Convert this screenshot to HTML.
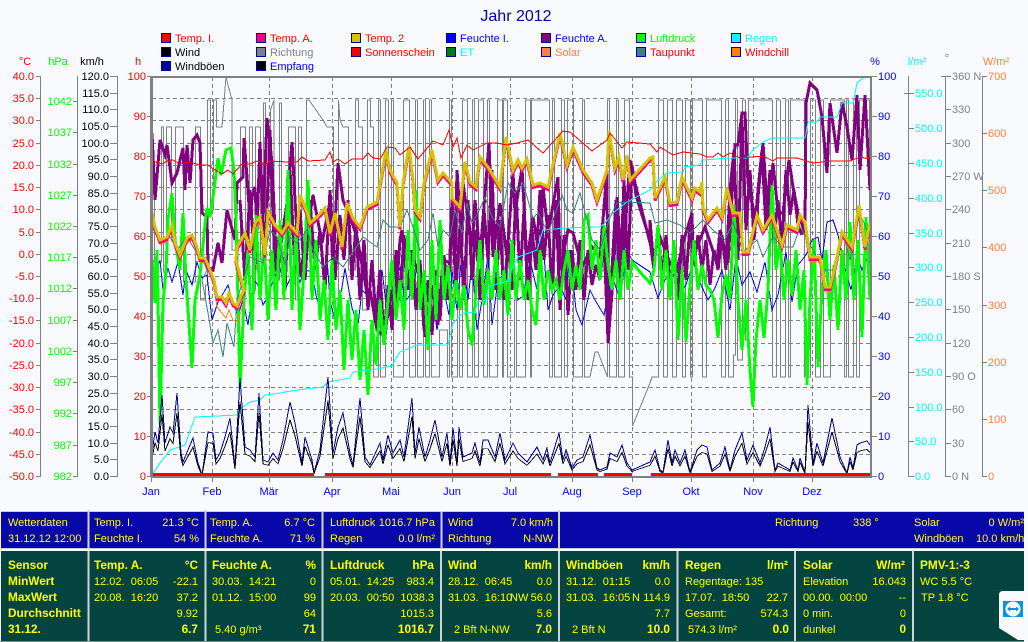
<!DOCTYPE html>
<html><head><meta charset="utf-8"><title>Jahr 2012</title>
<style>
html,body{margin:0;padding:0;width:1028px;height:642px;overflow:hidden;background:#F8FAFD}
svg{display:block;position:absolute;left:0;top:0}
text{font-family:"Liberation Sans",sans-serif;font-size:11px}
.e{text-anchor:end}.c{text-anchor:middle}
.y text{fill:#FF0}.y .b{font-weight:bold;font-size:11.8px}
polyline,path.l{fill:none;stroke-linejoin:miter;shape-rendering:crispEdges}
</style></head><body>
<svg width="1028" height="642" viewBox="0 0 1028 642" xmlns="http://www.w3.org/2000/svg">
<text x="516" y="21" class="c" style="font-size:16px" fill="#0000AA">Jahr 2012</text>

<!-- legend -->
<g stroke="#0000A0" stroke-width="1">
<rect x="161.500" y="33.500" width="9" height="9" fill="#F00"/><rect x="256.500" y="33.500" width="9" height="9" fill="#FF0080"/><rect x="351.500" y="33.500" width="9" height="9" fill="#D4C400"/><rect x="446.500" y="33.500" width="9" height="9" fill="#00F"/><rect x="541.500" y="33.500" width="9" height="9" fill="#800080"/><rect x="636.500" y="33.500" width="9" height="9" fill="#0F0"/><rect x="731.500" y="33.500" width="9" height="9" fill="#0FF"/>
<rect x="161.500" y="47.500" width="9" height="9" fill="#000"/><rect x="256.500" y="47.500" width="9" height="9" fill="#808080"/><rect x="351.500" y="47.500" width="9" height="9" fill="#F00"/><rect x="446.500" y="47.500" width="9" height="9" fill="#008000"/><rect x="541.500" y="47.500" width="9" height="9" fill="#FF8040"/><rect x="636.500" y="47.500" width="9" height="9" fill="#408080"/><rect x="731.500" y="47.500" width="9" height="9" fill="#FF8000"/>
<rect x="161.500" y="61.500" width="9" height="9" fill="#0000A0"/><rect x="256.500" y="61.500" width="9" height="9" fill="#000"/>
</g>
<g>
<text x="175" y="42" fill="#F00">Temp. I.</text><text x="270" y="42" fill="#F00">Temp. A.</text><text x="365" y="42" fill="#F00">Temp. 2</text><text x="460" y="42" fill="#00F">Feuchte I.</text><text x="555" y="42" fill="#00F">Feuchte A.</text><text x="650" y="42" fill="#0F0">Luftdruck</text><text x="745" y="42" fill="#0FF">Regen</text>
<text x="175" y="56" fill="#000">Wind</text><text x="270" y="56" fill="#808080">Richtung</text><text x="365" y="56" fill="#F00">Sonnenschein</text><text x="460" y="56" fill="#0FF">ET</text><text x="555" y="56" fill="#FF8040">Solar</text><text x="650" y="56" fill="#F00">Taupunkt</text><text x="745" y="56" fill="#F00">Windchill</text>
<text x="175" y="70" fill="#000">Windböen</text><text x="270" y="70" fill="#00F">Empfang</text>
</g>

<!-- axis titles -->
<text x="25" y="65" class="c" fill="#F00">°C</text><text x="58" y="65" class="c" fill="#0F0">hPa</text><text x="92" y="65" class="c" fill="#000">km/h</text><text x="138" y="65" class="c" fill="#F00">h</text>
<text x="875" y="65" class="c" fill="#00F">%</text><text x="917" y="65" class="c" fill="#0FF">l/m²</text><text x="947" y="62" class="c" fill="#808080">°</text><text x="996" y="65" class="c" fill="#FF8040">W/m²</text>

<!-- left axes -->
<path class="l" stroke="#808080" d="M40.500 76V476M36 76.500H41M36 98.500H41M36 120.500H41M36 143.500H41M36 165.500H41M36 187.500H41M36 209.500H41M36 232.500H41M36 254.500H41M36 276.500H41M36 298.500H41M36 320.500H41M36 343.500H41M36 365.500H41M36 387.500H41M36 409.500H41M36 432.500H41M36 454.500H41M36 476.500H41"/>
<path class="l" stroke="#808080" d="M77.500 76V476M73 101.500H78M73 132.500H78M73 164.500H78M73 195.500H78M73 226.500H78M73 257.500H78M73 288.500H78M73 320.500H78M73 351.500H78M73 382.500H78M73 413.500H78M73 445.500H78M73 476.500H78"/>
<path class="l" stroke="#808080" d="M117.500 76V476M110 76.500H118M110 93.500H118M110 109.500H118M110 126.500H118M110 143.500H118M110 159.500H118M110 176.500H118M110 193.500H118M110 209.500H118M110 226.500H118M110 243.500H118M110 259.500H118M110 276.500H118M110 293.500H118M110 309.500H118M110 326.500H118M110 343.500H118M110 359.500H118M110 376.500H118M110 393.500H118M110 409.500H118M110 426.500H118M110 443.500H118M110 459.500H118M110 476.500H118"/>
<path class="l" stroke="#808080" d="M147 76.500H151M147 116.500H151M147 156.500H151M147 196.500H151M147 236.500H151M147 276.500H151M147 316.500H151M147 356.500H151M147 396.500H151M147 436.500H151M147 476.500H151"/>
<g class="e" fill="#F00" text-anchor="end">
<text x="34" y="80">40.0</text><text x="34" y="102">35.0</text><text x="34" y="124">30.0</text><text x="34" y="147">25.0</text><text x="34" y="169">20.0</text><text x="34" y="191">15.0</text><text x="34" y="213">10.0</text><text x="34" y="236">5.0</text><text x="34" y="258">0.0</text><text x="34" y="280">-5.0</text><text x="34" y="302">-10.0</text><text x="34" y="324">-15.0</text><text x="34" y="347">-20.0</text><text x="34" y="369">-25.0</text><text x="34" y="391">-30.0</text><text x="34" y="413">-35.0</text><text x="34" y="436">-40.0</text><text x="34" y="458">-45.0</text><text x="34" y="480">-50.0</text>
</g>
<g fill="#0F0" text-anchor="end">
<text x="72" y="105">1042</text><text x="72" y="136">1037</text><text x="72" y="168">1032</text><text x="72" y="199">1027</text><text x="72" y="230">1022</text><text x="72" y="261">1017</text><text x="72" y="292">1012</text><text x="72" y="324">1007</text><text x="72" y="355">1002</text><text x="72" y="386">997</text><text x="72" y="417">992</text><text x="72" y="449">987</text><text x="72" y="480">982</text>
</g>
<g fill="#000" text-anchor="end">
<text x="109" y="80">120.0</text><text x="109" y="97">115.0</text><text x="109" y="113">110.0</text><text x="109" y="130">105.0</text><text x="109" y="147">100.0</text><text x="109" y="163">95.0</text><text x="109" y="180">90.0</text><text x="109" y="197">85.0</text><text x="109" y="213">80.0</text><text x="109" y="230">75.0</text><text x="109" y="247">70.0</text><text x="109" y="263">65.0</text><text x="109" y="280">60.0</text><text x="109" y="297">55.0</text><text x="109" y="313">50.0</text><text x="109" y="330">45.0</text><text x="109" y="347">40.0</text><text x="109" y="363">35.0</text><text x="109" y="380">30.0</text><text x="109" y="397">25.0</text><text x="109" y="413">20.0</text><text x="109" y="430">15.0</text><text x="109" y="447">10.0</text><text x="109" y="463">5.0</text><text x="109" y="480">0.0</text>
</g>
<g fill="#F00" text-anchor="end">
<text x="146" y="80">100</text><text x="146" y="120">90</text><text x="146" y="160">80</text><text x="146" y="200">70</text><text x="146" y="240">60</text><text x="146" y="280">50</text><text x="146" y="320">40</text><text x="146" y="360">30</text><text x="146" y="400">20</text><text x="146" y="440">10</text><text x="146" y="480">0</text>
</g>

<!-- right axes -->
<path class="l" stroke="#808080" d="M871 76.500H877M871 116.500H877M871 156.500H877M871 196.500H877M871 236.500H877M871 276.500H877M871 316.500H877M871 356.500H877M871 396.500H877M871 436.500H877M871 476.500H877"/>
<g fill="#00F">
<text x="878" y="80">100</text><text x="878" y="120">90</text><text x="878" y="160">80</text><text x="878" y="200">70</text><text x="878" y="240">60</text><text x="878" y="280">50</text><text x="878" y="320">40</text><text x="878" y="360">30</text><text x="878" y="400">20</text><text x="878" y="440">10</text><text x="878" y="480">0</text>
</g>
<path class="l" stroke="#808080" d="M908.500 76V476M904 93.500H914M908 128.500H914M908 163.500H914M908 198.500H914M908 233.500H914M908 267.500H914M908 302.500H914M908 337.500H914M908 372.500H914M908 407.500H914M908 441.500H914M908 476.500H914"/>
<g fill="#0FF">
<text x="915" y="97">550.0</text><text x="915" y="132">500.0</text><text x="915" y="167">450.0</text><text x="915" y="202">400.0</text><text x="915" y="237">350.0</text><text x="915" y="271">300.0</text><text x="915" y="306">250.0</text><text x="915" y="341">200.0</text><text x="915" y="376">150.0</text><text x="915" y="411">100.0</text><text x="915" y="445">50.0</text><text x="915" y="480">0.0</text>
</g>
<path class="l" stroke="#808080" d="M945.500 76V476M941 76.500H951M945 109.500H951M945 143.500H951M945 176.500H951M945 209.500H951M945 243.500H951M945 276.500H951M945 309.500H951M945 343.500H951M945 376.500H951M945 409.500H951M945 443.500H951M945 476.500H951"/>
<g fill="#808080">
<text x="952" y="80">360 N</text><text x="952" y="113">330</text><text x="952" y="147">300</text><text x="952" y="180">270 W</text><text x="952" y="213">240</text><text x="952" y="247">210</text><text x="952" y="280">180 S</text><text x="952" y="313">150</text><text x="952" y="347">120</text><text x="952" y="380">90 O</text><text x="952" y="413">60</text><text x="952" y="447">30</text><text x="952" y="480">0 N</text>
</g>
<path class="l" stroke="#808080" d="M982.500 76V476M982 76.500H987M982 133.500H987M982 190.500H987M982 247.500H987M982 305.500H987M982 362.500H987M982 419.500H987M982 476.500H987"/>
<g fill="#FF8040">
<text x="988" y="80">700</text><text x="988" y="137">600</text><text x="988" y="194">500</text><text x="988" y="251">400</text><text x="988" y="309">300</text><text x="988" y="366">200</text><text x="988" y="423">100</text><text x="988" y="480">0</text>
</g>

<!-- months -->
<g fill="#00F" text-anchor="middle">
<text x="151" y="495">Jan</text><text x="212" y="495">Feb</text><text x="269" y="495">Mär</text><text x="332" y="495">Apr</text><text x="391" y="495">Mai</text><text x="452" y="495">Jun</text><text x="510" y="495">Jul</text><text x="572" y="495">Aug</text><text x="632" y="495">Sep</text><text x="691" y="495">Okt</text><text x="753" y="495">Nov</text><text x="812" y="495">Dez</text>
</g>
<path class="l" stroke="#808080" d="M151.500 476V482M212.500 476V482M269.500 476V482M332.500 476V482M391.500 476V482M452.500 476V482M510.500 476V482M572.500 476V482M632.500 476V482M691.500 476V482M753.500 476V482M812.500 476V482"/>

<!-- grid -->
<path class="l" stroke="#808080" stroke-dasharray="4 3" d="M152 98.500H870M152 120.500H870M152 143.500H870M152 165.500H870M152 187.500H870M152 209.500H870M152 232.500H870M152 254.500H870M152 276.500H870M152 298.500H870M152 320.500H870M152 343.500H870M152 365.500H870M152 387.500H870M152 409.500H870M152 432.500H870M152 454.500H870M212.500 77V475M269.500 77V475M332.500 77V475M391.500 77V475M452.500 77V475M510.500 77V475M572.500 77V475M632.500 77V475M691.500 77V475M753.500 77V475M812.500 77V475"/>

<!-- Richtung -->
<path class="l" stroke="#808080" stroke-width="1" d="M152.500 250V190H154.500V262H161.500V127H163.500V272H166.500V127H171.500V240H175.500V127H183.500V282H195.500V127H200.500V300H205.500V285H207.500V100H210.500V210H213.500V100H216.500V127L222 127L226 77L228 85L232 100V250H238.500V240H240.500V127H245.500V250H249.500V127H252.500V290H255.500V127H260.500V260H263.500V103H265.500V260H270.500V110L274 100V280H279.500V103H281.500V220H288.500V127H295.500V300H298.500V127H301.500V250H306.500V100H309L323 120L327 127H333.500V300H338.500V100L340 120L343 127H348.500V270H355.500V100H358.500V127H362.500V310H367.500V100H370.500V127H373.500V377H378.500V100H380.500V377H385.500V100H388.500V300H391.500V100H393.500V377H403.500V100H409.500V377H415.500V100H417.500V377H423.500V100H425.500V377H429.500V100H431.500V377H439.500V330H447.500V377H449.500V100H451.500V377H457.500V200H459.500V377H462.500V100H467.500V377H472.500V100H474.500V377H478.500V100H483.500V377H487.500V100H489.500V377H497.500V100H502.500V377H503.500V100H507.500V377H514.500V300H516.500V377H525.500V100H530.500V377H531.500V100H549.500V377H552.500V100H554.500V377H561.500V100H564.500V377H567.500V100H573.500V377H582.500V100H584.500V377H590L595 352H598L607.500 377V100H609.500V377H616.500V100H618.500V377H624.500V100H629.500V377H632.500V426L650 383L652 377H658.500V100H663.500V377H667.500V100H672.500V377H676.500V100H682.500V377H685.500V100H690.500V377H692.500V100H702.500V377H706.500V100H721.500V377H725.500V100H728.500V377H733.500V355H735.500V100H737.500V360H742.500V100H745.500V340H748.500V100H772.500V377H776.500V100H780.500V377H785.500V100H788.500V377H790.500V100H804.500V377H810.500V100H815.500V377H820.500V100H823.500V377H830.500V100H844.500V377H846.500V100H848.500V377H853.500V100H856.500V377H859.500V100H869.500V280"/>

<!-- Feuchte I. -->
<polyline stroke="#00F" stroke-width="1" points="152,262 155,278 160,260 163,290 168,268 172,282 178,262 183,295 186,270 192,285 197,262 202,278 207,275 212,320 218,302 224,292 228,285 233,303 238,315 243,300 248,325 254,280 258,285 263,305 268,296 275,275 280,268 285,290 293,272 297,272 300,282 305,270 312,272 316,295 320,310 323,285 327,258 330,300 335,322 340,300 345,268 352,308 358,325 362,290 372,300 378,310 382,270 388,320 393,285 400,268 405,302 410,295 418,265 425,310 430,280 437,330 444,290 449,315 452,270 457,310 462,250 468,300 472,262 477,330 482,300 488,255 492,325 498,280 503,275 508,315 513,262 518,300 523,296 530,260 537,290 543,240 548,310 553,295 560,285 566,300 570,250 576,310 582,325 590,290 595,300 604,315 612,275 620,300 627,250 632,260 650,272 658,298 665,280 672,270 680,295 686,285 693,262 701,285 708,300 715,288 722,270 730,310 736,258 742,285 750,272 757,292 765,262 772,310 778,295 786,252 792,302 798,265 806,255 812,240 818,237 822,260 827,222 833,220 838,235 845,268 851,290 857,255 862,270 867,258 870,262"/>

<!-- Feuchte A. -->
<polyline stroke="#800080" stroke-width="3" points="152,133 155,200 160,140 165,155 167,145 172,183 177,173 183,148 185,190 187,145 190,183 193,140 197,135 200,143 202,213 207,217 208,267 213,270 218,243 222,263 227,210 235,240 237,183 243,177 244,138 247,177 250,220 252,197 255,187 257,230 260,142 263,220 267,118 272,163 277,277 282,237 287,203 292,142 295,200 300,277 313,195 322,243 330,202 333,270 338,163 343,200 350,217 357,237 363,270 368,300 370,290 377,330 385,337 390,290 395,310 400,240 402,230 407,280 413,258 420,277 423,300 425,337 432,285 438,325 443,260 450,263 452,200 455,263 457,170 462,247 463,183 472,247 475,200 480,257 489,143 493,257 500,203 507,257 513,173 515,213 522,168 527,263 533,217 540,260 543,187 548,233 558,177 560,270 568,230 573,233 582,267 592,247 600,257 607,170 608,343 613,280 617,197 622,273 630,160 635,183 650,243 650,220 653,257 660,237 670,263 677,270 683,243 692,213 693,257 705,227 717,263 720,230 728,263 735,145 738,145 742,113 745,113 748,183 752,203 757,223 758,197 763,143 768,220 773,163 778,213 783,213 789,160 793,187 798,213 805,233 806,103 810,83 817,90 822,117 827,173 830,103 837,153 842,102 847,127 852,160 857,95 860,170 865,95 870,190"/>
<polyline stroke="#800080" stroke-width="3" points="240,200 245,280 250,190 255,270 260,150 265,260 270,130 275,270 280,230 285,290 290,170 295,270 300,210 305,280 310,200 315,270 320,230 325,290 330,190 335,280 340,215 344,260 348,200 352,280 356,225 360,300 364,240 368,310 372,260 376,320 380,270 384,340 388,285 392,330 396,250 400,300 404,235 408,290 412,250 416,310 420,260 424,330 428,280 432,335 436,270 440,320 444,255 448,300 452,210 456,290 460,225 464,300 468,200 472,280 476,230 480,300 484,210 488,260 492,170 496,290 500,220 504,300 508,240 512,290 516,190 520,280 524,210 528,300 532,230 536,270 540,190 544,260 548,215 552,290 556,200 560,310 564,235 568,315 572,250 576,290 580,240 584,300 588,250 592,285 596,265 600,280 604,240 608,340 612,270 616,200 620,290 624,180 628,270 632,165 636,195 642,215 650,240 654,270 658,225 662,280 666,235 670,285 674,250 678,300 682,235 686,280 690,225 694,265 698,235 702,270 706,240 710,285 714,250 718,270 722,235 726,270 730,190 734,150 738,260 742,120 746,230 750,170 754,240 758,190 762,150 766,230 770,170 774,240 778,200 782,245 786,170 790,215 794,190 798,225 802,235"/>

<!-- Luftdruck -->
<polyline stroke="#0F0" stroke-width="3" points="152,300 153,260 155,303 157,250 158,300 160,423 163,303 166,270 168,220 172,193 175,240 177,253 180,270 183,213 186,280 192,368 195,300 200,275 205,225 207,208 210,217 214,190 218,158 221,175 226,150 231,148 234,170 236,220 238,300 240,387 244,300 248,250 252,330 256,215 260,300 264,240 268,320 272,250 276,310 280,220 284,300 288,170 292,310 296,230 300,330 304,270 308,180 312,300 316,240 320,320 324,280 328,340 332,260 336,330 340,290 344,370 348,300 352,360 356,310 360,380 364,330 368,395 372,320 376,365 380,300 384,345 388,300 392,260 396,320 400,280 404,330 408,230 412,300 416,190 420,310 424,270 428,350 432,240 436,320 440,220 444,300 448,265 452,320 456,280 460,310 464,285 468,330 472,345 476,290 480,240 484,305 488,270 492,300 496,250 500,300 504,270 508,315 512,240 516,300 520,260 524,300 528,280 532,310 536,325 540,250 544,300 548,270 552,290 556,280 560,300 564,270 568,250 572,290 576,265 580,290 584,220 588,215 592,270 596,240 600,280 604,225 608,265 612,290 616,260 620,300 624,250 628,290 632,262 640,272 650,283 654,270 658,225 662,290 666,250 670,300 674,240 678,340 682,270 686,342 690,285 694,240 698,290 702,265 706,285 710,290 714,300 718,338 722,295 726,275 730,300 734,205 738,300 742,350 746,300 750,370 753,407 756,340 760,300 764,338 768,290 772,185 776,270 780,240 784,300 788,260 792,295 796,250 800,310 804,270 807,385 810,300 814,240 818,367 822,290 826,250 830,320 834,265 838,330 842,250 846,300 850,222 854,300 858,240 862,337 866,217 870,300"/>

<!-- Regen -->
<polyline stroke="#0FF" stroke-width="1" points="152,475 160,463 170,450 185,445 195,417 238,415 243,407 250,402 260,400 265,395 280,393 297,390 323,387 328,382 350,378 353,372 377,369 392,366 398,355 400,352 410,348 417,345 448,345 453,323 463,313 475,312 478,302 487,300 488,287 500,283 510,280 510,272 518,257 537,250 543,230 567,228 600,227 605,223 613,213 627,202 650,190 655,183 667,173 683,172 685,167 700,165 702,160 730,158 747,158 753,150 763,142 772,138 805,138 808,122 817,122 820,117 837,117 842,103 853,103 857,83 863,78 871,77"/>

<!-- Taupunkt -->
<polyline stroke="#408080" stroke-width="1" points="152,227 155,233 160,243 170,237 177,250 187,237 195,250 200,253 207,270 202,280 208,313 213,343 218,330 223,357 227,323 234,347 237,300 250,257 263,263 270,230 277,237 285,265 290,237 297,243 307,230 313,250 323,267 333,257 343,267 363,237 377,247 383,220 390,227 400,227 407,210 413,227 420,250 428,240 433,213 438,247 443,230 450,237 455,210 462,233 467,203 472,223 478,213 485,197 492,217 500,227 508,183 515,193 523,183 533,218 538,213 548,233 562,195 567,210 573,213 580,193 592,240 600,250 610,217 617,203 627,202 650,203 655,223 667,220 680,225 690,233 703,220 713,230 725,240 733,222 743,252 757,240 763,257 773,237 783,247 793,247 800,227 813,250 823,270 833,270 842,230 850,260 860,213 867,230 870,227"/>

<!-- Windchill (visible where it separates from the temperature lines) -->
<polyline stroke="#FF8000" stroke-width="1" points="160,245 167,242 172,230 175,248 180,260 187,243 192,240 197,252 200,263 205,263 210,275 214,285 217,307 222,313 226,318 229,310 233,320 237,322 241,312 244,300"/>
<polyline stroke="#FF8000" stroke-width="1" points="805,225 810,262 820,262 825,292 830,292 835,272 842,237 852,252 859,210 865,252 870,228"/>

<!-- Temp. A. / Temp 2 -->
<polyline stroke="#FF0080" stroke-width="3" transform="translate(0,2.500)" points="152,213 155,227 160,240 167,237 172,225 175,243 180,255 187,238 192,235 197,247 200,258 205,258 210,270 214,280 217,297 222,297 226,303 229,293 233,303 237,306 241,296 244,290 236,260 237,247 245,233 250,250 255,223 260,217 265,255 268,212 275,225 282,233 288,223 297,233 300,195 307,212 310,223 317,217 325,208 330,233 335,213 342,247 347,203 353,218 360,227 367,207 377,202 382,173 386,150 390,170 397,183 400,227 403,183 409,146 413,180 415,210 420,217 424,183 432,150 438,180 443,173 452,183 452,198 460,207 465,162 470,182 476,187 480,157 488,167 500,187 506,137 513,170 518,160 522,168 527,159 533,185 540,183 548,187 560,133 567,165 573,147 583,170 592,183 597,200 607,170 609,131 615,168 619,157 623,180 627,155 630,180 650,158 653,157 655,198 665,177 670,203 677,202 682,177 692,198 695,188 700,192 702,182 703,208 708,220 717,208 722,217 727,188 733,213 740,213 743,252 748,252 757,215 763,230 772,215 782,245 787,225 797,230 800,215 805,222 810,257 820,257 825,287 830,287 835,267 842,232 852,247 859,205 865,247 870,223"/>
<polyline stroke="#D4C400" stroke-width="3" points="152,213 155,227 160,240 167,237 172,225 175,243 180,255 187,238 192,235 197,247 200,258 205,258 210,270 214,280 217,297 222,297 226,303 229,293 233,303 237,306 241,296 244,290 236,260 237,247 245,233 250,250 255,223 260,217 265,255 268,212 275,225 282,233 288,223 297,233 300,195 307,212 310,223 317,217 325,208 330,233 335,213 342,247 347,203 353,218 360,227 367,207 377,202 382,173 386,150 390,170 397,183 400,227 403,183 409,146 413,180 415,210 420,217 424,183 432,150 438,180 443,173 452,183 452,198 460,207 465,162 470,182 476,187 480,157 488,167 500,187 506,137 513,170 518,160 522,168 527,159 533,185 540,183 548,187 560,133 567,165 573,147 583,170 592,183 597,200 607,170 609,131 615,168 619,157 623,180 627,155 630,180 650,158 653,157 655,198 665,177 670,203 677,202 682,177 692,198 695,188 700,192 702,182 703,208 708,220 717,208 722,217 727,188 733,213 740,213 743,252 748,252 757,215 763,230 772,215 782,245 787,225 797,230 800,215 805,222 810,257 820,257 825,287 830,287 835,267 842,232 852,247 859,205 865,247 870,223"/>

<!-- Temp. I. -->
<polyline stroke="#F00" stroke-width="1" points="152,162 157,162 162,164 167,161 173,160 180,164 190,162 200,165 208,165 215,170 222,174 228,170 233,174 242,164 250,164 257,161 265,165 270,161 287,162 297,162 302,157 308,161 325,160 330,152 333,162 338,159 345,164 352,159 363,159 368,153 373,158 380,159 387,147 395,148 400,155 410,147 418,159 433,141 443,145 449,130 453,147 457,138 461,158 467,145 473,150 487,143 497,143 507,145 517,143 528,140 543,153 563,131 570,132 577,138 592,151 607,140 610,133 622,148 627,142 650,144 657,152 660,147 673,155 683,152 700,154 707,157 713,157 718,153 723,157 730,153 740,158 763,156 773,161 777,158 797,158 813,163 830,161 850,161 860,157 870,159"/>

<!-- Windböen / Wind -->
<polyline stroke="#0000A0" stroke-width="1" points="152,453 155,432 158,443 162,395 165,443 170,427 173,433 177,393 181,453 183,462 188,450 193,438 198,463 202,475 208,432 213,433 216,460 220,453 225,437 230,418 235,467 240,378 245,447 250,450 255,457 259,393 263,460 268,462 273,453 278,460 283,440 290,402 295,423 302,463 305,437 312,460 314,473 320,450 328,377 333,453 338,427 343,413 350,453 353,465 360,398 365,457 370,465 380,443 383,460 388,435 393,453 400,440 404,457 412,398 415,453 419,427 425,457 430,440 435,420 442,457 447,433 450,463 453,428 457,463 459,427 463,457 472,453 475,443 480,463 483,440 488,440 495,457 500,433 505,460 513,443 518,453 527,462 537,447 543,460 547,448 550,463 559,433 563,460 566,450 572,468 577,460 583,457 590,435 597,468 600,470 607,467 610,453 617,457 622,445 627,463 632,470 650,462 655,450 660,470 663,472 668,440 672,463 675,450 680,463 685,450 690,472 697,450 702,445 707,447 712,470 720,463 725,447 730,470 735,450 742,433 747,460 753,445 760,463 765,447 770,427 775,470 778,463 790,470 793,458 798,470 800,458 805,473 808,405 813,463 817,443 823,463 832,418 840,457 847,473 850,457 853,468 857,445 860,443 867,441 870,445"/>
<polyline stroke="#000" stroke-width="1" transform="translate(0,114.240) scale(1,.76)" points="152,453 155,432 158,443 162,395 165,443 170,427 173,433 177,393 181,453 183,462 188,450 193,438 198,463 202,475 208,432 213,433 216,460 220,453 225,437 230,418 235,467 240,378 245,447 250,450 255,457 259,393 263,460 268,462 273,453 278,460 283,440 290,402 295,423 302,463 305,437 312,460 314,473 320,450 328,377 333,453 338,427 343,413 350,453 353,465 360,398 365,457 370,465 380,443 383,460 388,435 393,453 400,440 404,457 412,398 415,453 419,427 425,457 430,440 435,420 442,457 447,433 450,463 453,428 457,463 459,427 463,457 472,453 475,443 480,463 483,440 488,440 495,457 500,433 505,460 513,443 518,453 527,462 537,447 543,460 547,448 550,463 559,433 563,460 566,450 572,468 577,460 583,457 590,435 597,468 600,470 607,467 610,453 617,457 622,445 627,463 632,470 650,462 655,450 660,470 663,472 668,440 672,463 675,450 680,463 685,450 690,472 697,450 702,445 707,447 712,470 720,463 725,447 730,470 735,450 742,433 747,460 753,445 760,463 765,447 770,427 775,470 778,463 790,470 793,458 798,470 800,458 805,473 808,405 813,463 817,443 823,463 832,418 840,457 847,473 850,457 853,468 857,445 860,443 867,441 870,445"/>

<!-- Sonnenschein -->
<path class="l" stroke="#F00" stroke-width="3" d="M152 474.500H314M325 474.500H551M558 474.500H598M604 474.500H632M651 474.500H870"/>

<!-- frame -->
<path class="l" stroke="#808080" stroke-width="2" d="M152 77H871V477H151"/>
<rect x="150" y="76" width="3" height="401" fill="#808080"/>

<!-- panels -->
<rect x="1" y="511" width="1023" height="38" fill="#C8CCD0"/>
<rect x="1" y="512" width="1023" height="36" fill="#0808A8"/>
<rect x="1" y="551" width="1023" height="90" fill="#034440"/>
<rect x="0" y="641" width="1024" height="1" fill="#808888"/>
<path class="l" stroke="#D0D4D8" stroke-width="2" d="M88.500 510V549M205.500 510V549M322.500 511V549M441.500 511V549M559 510V549M88.500 551V641M205.500 551V641M322.500 551V641M441 551V641M559 551V641M677.500 551V641M795 551V641M913 551V641"/>

<g class="y">
<text x="8" y="526">Wetterdaten</text><text x="8" y="542">31.12.12 12:00</text>
<text x="94" y="526">Temp. I.</text><text x="199" y="526" class="e">21.3 °C</text><text x="94" y="542">Feuchte I.</text><text x="199" y="542" class="e">54 %</text>
<text x="210" y="526">Temp. A.</text><text x="315" y="526" class="e">6.7 °C</text><text x="210" y="542">Feuchte A.</text><text x="315" y="542" class="e">71 %</text>
<text x="330" y="526">Luftdruck</text><text x="435" y="526" class="e">1016.7 hPa</text><text x="330" y="542">Regen</text><text x="435" y="542" class="e">0.0 l/m²</text>
<text x="448" y="526">Wind</text><text x="553" y="526" class="e">7.0 km/h</text><text x="448" y="542">Richtung</text><text x="553" y="542" class="e">N-NW</text>
<text x="775" y="526">Richtung</text><text x="853" y="526">338 °</text>
<text x="914" y="526">Solar</text><text x="1024" y="526" class="e">0 W/m²</text><text x="914" y="542">Windböen</text><text x="976" y="542">10.0 km/h</text>

<g class="b"><text class="b" x="8" y="569">Sensor</text><text class="b" x="8" y="585">MinWert</text><text class="b" x="8" y="601">MaxWert</text><text class="b" x="8" y="617">Durchschnitt</text><text class="b" x="8" y="633">31.12.</text></g>

<text class="b" x="94" y="569">Temp. A.</text><text class="b e" x="198" y="569">°C</text>
<text x="94" y="585">12.02.&#160; 06:05</text><text class="e" x="198" y="585">-22.1</text>
<text x="94" y="601">20.08.&#160; 16:20</text><text class="e" x="198" y="601">37.2</text>
<text class="e" x="198" y="617">9.92</text><text class="b e" x="198" y="633">6.7</text>

<text class="b" x="212" y="569">Feuchte A.</text><text class="b e" x="316" y="569">%</text>
<text x="212" y="585">30.03.&#160; 14:21</text><text class="e" x="316" y="585">0</text>
<text x="212" y="601">01.12.&#160; 15:00</text><text class="e" x="316" y="601">99</text>
<text class="e" x="316" y="617">64</text><text x="215" y="633">5.40 g/m³</text><text class="b e" x="316" y="633">71</text>

<text class="b" x="330" y="569">Luftdruck</text><text class="b e" x="434" y="569">hPa</text>
<text x="330" y="585">05.01.&#160; 14:25</text><text class="e" x="434" y="585">983.4</text>
<text x="330" y="601">20.03.&#160; 00:50</text><text class="e" x="434" y="601">1038.3</text>
<text class="e" x="434" y="617">1015.3</text><text class="b e" x="434" y="633">1016.7</text>

<text class="b" x="448" y="569">Wind</text><text class="b e" x="552" y="569">km/h</text>
<text x="448" y="585">28.12.&#160; 06:45</text><text class="e" x="552" y="585">0.0</text>
<text x="448" y="601">31.03.&#160; 16:10</text><text x="510" y="601">NW</text><text class="e" x="552" y="601">56.0</text>
<text class="e" x="552" y="617">5.6</text><text x="454" y="633">2 Bft N-NW</text><text class="b e" x="552" y="633">7.0</text>

<text class="b" x="566" y="569">Windböen</text><text class="b e" x="670" y="569">km/h</text>
<text x="566" y="585">31.12.&#160; 01:15</text><text class="e" x="670" y="585">0.0</text>
<text x="566" y="601">31.03.&#160; 16:05</text><text x="632" y="601">N</text><text class="e" x="670" y="601">114.9</text>
<text class="e" x="670" y="617">7.7</text><text x="572" y="633">2 Bft N</text><text class="b e" x="670" y="633">10.0</text>

<text class="b" x="685" y="569">Regen</text><text class="b e" x="788" y="569">l/m²</text>
<text x="685" y="585">Regentage: 135</text>
<text x="685" y="601">17.07.&#160; 18:50</text><text class="e" x="788" y="601">22.7</text>
<text x="685" y="617">Gesamt:</text><text class="e" x="788" y="617">574.3</text>
<text x="688" y="633">574.3 l/m²</text><text class="b e" x="789" y="633">0.0</text>

<text class="b" x="803" y="569">Solar</text><text class="b e" x="905" y="569">W/m²</text>
<text x="803" y="585">Elevation</text><text class="e" x="906" y="585">16.043</text>
<text x="803" y="601">00.00.&#160; 00:00</text><text class="e" x="906" y="601">--</text>
<text x="803" y="617">0 min.</text><text class="e" x="906" y="617">0</text>
<text x="803" y="633">dunkel</text><text class="b e" x="906" y="633">0</text>

<text class="b" x="920" y="569">PMV-1:-3</text>
<text x="920" y="585">WC 5.5 °C</text><text x="921" y="601">TP 1.8 °C</text>
</g>

<!-- clip right strip -->
<rect x="1024" y="505" width="4" height="137" fill="#F8FAFD"/>

<!-- TeamViewer tab -->
<path d="M1028 591H1003Q999 591 999 595V628L1018 640H1028Z" fill="#F8FAFD"/>
<rect x="1003" y="601" width="20" height="16" fill="#0E8EE9"/>
<circle cx="1013" cy="609" r="7.500" fill="#FFF"/>
<path d="M1007 609L1010 606.500V608H1016V606.500L1019 609L1016 611.500V610H1010V611.500Z" fill="#0E8EE9"/>
</svg>
</body></html>
